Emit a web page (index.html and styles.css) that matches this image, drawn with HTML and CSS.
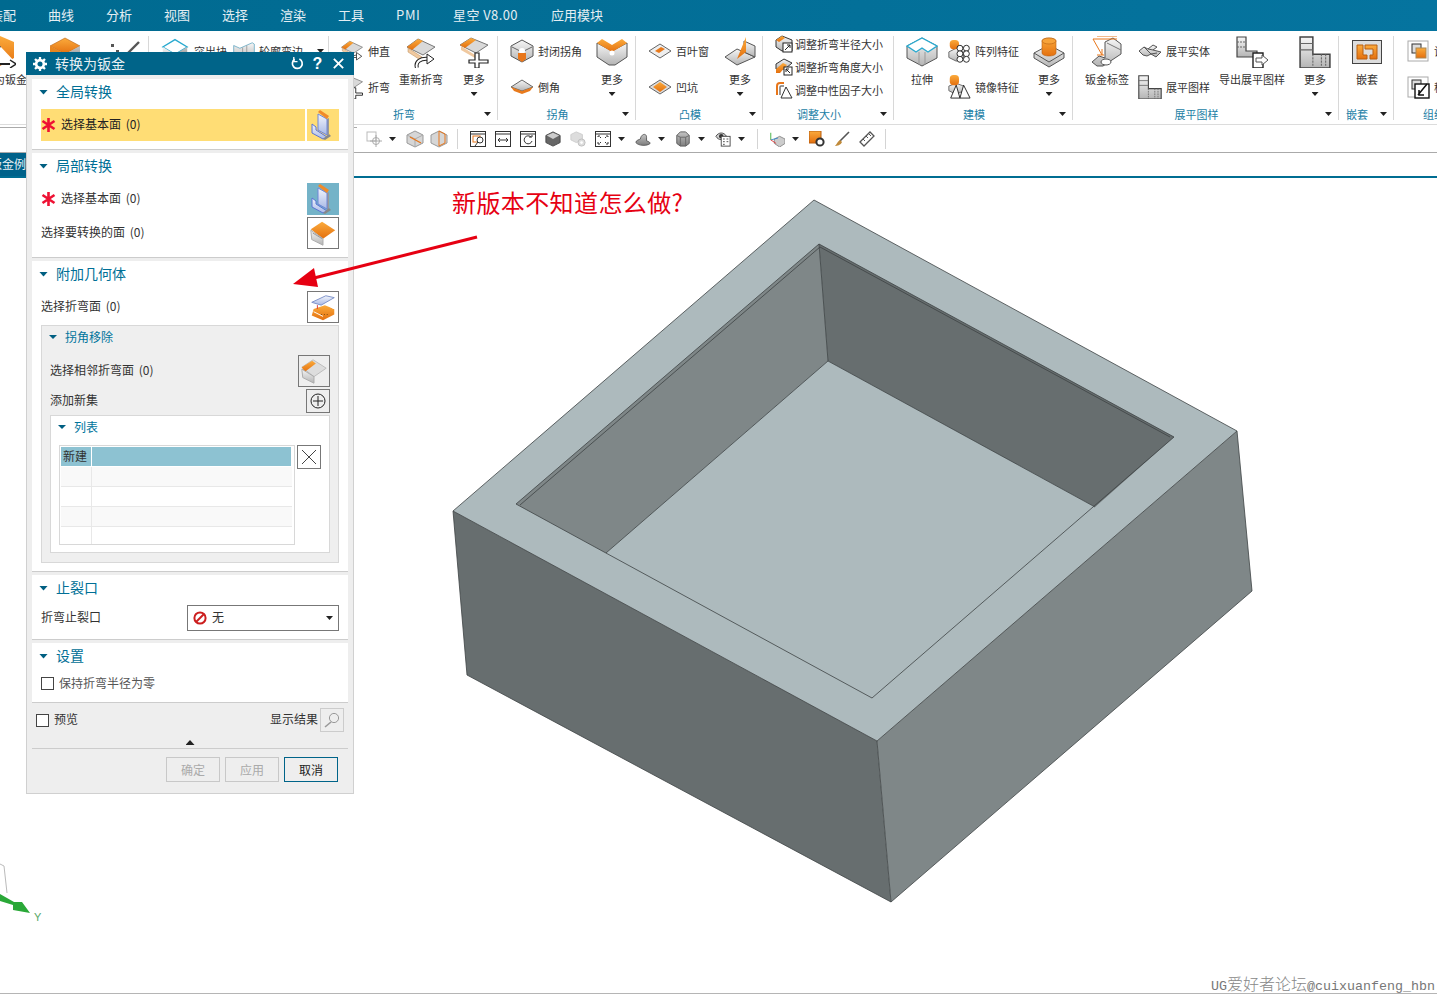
FILE: index.html
```html
<!DOCTYPE html>
<html lang="zh">
<head>
<meta charset="utf-8">
<title>转换为钣金</title>
<link rel="stylesheet" href="styles.css">
</head>
<body>
<svg class="defs" aria-hidden="true">
  <defs>
    <linearGradient id="go" x1="0" y1="0" x2="0" y2="1"><stop offset="0" stop-color="#fbab3c"/><stop offset="1" stop-color="#e4700f"/></linearGradient>
    <linearGradient id="gg" x1="0" y1="0" x2="0" y2="1"><stop offset="0" stop-color="#f6f6f6"/><stop offset="1" stop-color="#b4b4b4"/></linearGradient>
    <linearGradient id="gd" x1="0" y1="0" x2="0" y2="1"><stop offset="0" stop-color="#c4c4c4"/><stop offset="1" stop-color="#7d7d7d"/></linearGradient>
    <linearGradient id="gb" x1="0" y1="0" x2="0" y2="1"><stop offset="0" stop-color="#f2f5fc"/><stop offset="1" stop-color="#a9b9e6"/></linearGradient>

    <symbol id="i-convert" viewBox="0 0 32 32"><path d="M4 6 16 0l14 6v16L16 30z" fill="url(#go)"/><path d="M4 6l12 6v12L4 18z" fill="url(#gg)" stroke="#666"/><path d="M16 10 6 28h22l5-0" fill="#fff" stroke="#222" stroke-width="2"/><path d="M26 24l6 4-6 4" fill="#fff" stroke="#222" stroke-width="1.5"/></symbol>
    <symbol id="i-box" viewBox="0 0 32 32"><path d="M16 2 31 10 16 18 1 10z" fill="url(#go)" stroke="#b85f10" stroke-width=".6"/><path d="M1 10 16 18V30L1 22z" fill="#e8861f"/><path d="M31 10 16 18V30L31 22z" fill="url(#gd)"/></symbol>
    <symbol id="i-sketch" viewBox="0 0 32 32"><g fill="#555"><rect x="2" y="8" width="3" height="3"/><rect x="7" y="14" width="3" height="3"/><rect x="2" y="18" width="3" height="3"/></g><path d="M12 24 30 6" stroke="#555" stroke-width="2.4"/></symbol>
    <symbol id="i-tab" viewBox="0 0 32 32"><path d="M16 2 31 11 16 20 1 11z" fill="#fff" stroke="#27a9cf" stroke-width="1.6"/><path d="M1 11 16 20V30L1 21z" fill="url(#gg)"/><path d="M31 11 16 20V30L31 21z" fill="url(#gd)"/></symbol>
    <symbol id="i-flange" viewBox="0 0 32 32"><path d="M1 8 10 12 28 4 31 6V28L10 30 1 24z" fill="url(#gg)" stroke="#4d9cbb"/><path d="M14 11V28M20 8V28" stroke="#888"/></symbol>
    <symbol id="i-rebend" viewBox="0 0 32 32"><path d="M13 3 30 11 18 19 2 11z" fill="#d9d9d9" stroke="#777"/><path d="M13 3 18 5 7 14 2 11z" fill="url(#go)"/><path d="M3 12 17 21V25L3 16z" fill="#f0c9a0" stroke="#b98a55" stroke-width=".5"/><path d="M12 32C10 26 15 22 24 23" fill="none" stroke="#222" stroke-width="4"/><path d="M12 32C10 26 15 22 24 23" fill="none" stroke="#fff" stroke-width="2"/><path d="M22 18l7 5-7 5z" fill="#fff" stroke="#222"/></symbol>
    <symbol id="i-plus" viewBox="0 0 32 32"><path d="M13 2 30 9 18 17 2 9z" fill="#d9d9d9" stroke="#777"/><path d="M13 2 18 4 7 12 2 9z" fill="url(#go)"/><path d="M3 10 17 19V22L3 14z" fill="#f0c9a0"/><path d="M17 17h4v7h9v3h-9v5h-4v-5H11v-3h6z" fill="#fff" stroke="#222" stroke-width="1.2"/></symbol>
    <symbol id="i-close" viewBox="0 0 24 24"><path d="M12 1 23 7V17L12 23 1 17V7z" fill="url(#gg)" stroke="#555"/><path d="M2 8 12 13 22 8" fill="none" stroke="#666"/><circle cx="12" cy="12" r="3" fill="#fff"/><path d="M8 14h8v6l-4 3-4-3z" fill="#e8761a"/></symbol>
    <symbol id="i-chamfer" viewBox="0 0 24 16"><path d="M12 1 23 8 12 12 1 8z" fill="url(#gg)" stroke="#666"/><path d="M1 8 12 12 23 8 20 12 12 15 4 12z" fill="#e87a1c"/></symbol>
    <symbol id="i-vcorner" viewBox="0 0 32 30"><path d="M1 6 16 14 31 6V20L19 28H13L1 20z" fill="url(#gg)" stroke="#555"/><path d="M1 6 6 2 16 8 26 2 31 6 16 15z" fill="url(#go)"/><circle cx="16" cy="16" r="2.5" fill="#fff"/></symbol>
    <symbol id="i-louver" viewBox="0 0 24 16"><path d="M12 1 23 8 12 15 1 8z" fill="#eee" stroke="#666"/><path d="M7 8 13 4 17 6 11 10z" fill="#e87a1c"/></symbol>
    <symbol id="i-dimple" viewBox="0 0 24 16"><path d="M12 1 23 8 12 15 1 8z" fill="#ddd" stroke="#666"/><path d="M12 3 19 8 12 13 5 8z" fill="url(#go)"/></symbol>
    <symbol id="i-gusset" viewBox="0 0 32 32"><path d="M1 21 13 29 31 21 13 13z" fill="url(#gg)" stroke="#555"/><path d="M20 5 31 10V21L20 16z" fill="url(#gg)" stroke="#555"/><path d="M13 23 22 1V16z" fill="url(#go)"/></symbol>
    <symbol id="i-adj1" viewBox="0 0 18 18"><path d="M1 5 7 1 17 5V16H7L1 12z" fill="url(#gg)" stroke="#333"/><path d="M1 5 7 1 10 3 4 7z" fill="url(#go)"/><rect x="8" y="8" width="9" height="9" fill="#fff" stroke="#222"/><path d="M10 15 15 10M12 10h3v3" fill="none" stroke="#222"/></symbol>
    <symbol id="i-adj2" viewBox="0 0 18 18"><path d="M1 6 9 1 17 5 10 11 1 11z" fill="url(#gg)" stroke="#333"/><path d="M1 11 8 5 12 7 5 15 1 15z" fill="url(#go)"/><rect x="9" y="9" width="8" height="8" fill="#fff" stroke="#222"/><path d="M11 11 15 15M11 14v-3h3" fill="none" stroke="#222"/></symbol>
    <symbol id="i-adj3" viewBox="0 0 18 18"><path d="M2 14V5Q2 2 5 2H9" fill="none" stroke="#e8761a" stroke-width="2"/><path d="M5 14V6Q5 5 6 5H9" fill="none" stroke="#777" stroke-width="1.5"/><path d="M11 6 6 17H17z" fill="#fff" stroke="#333"/></symbol>
    <symbol id="i-extrude" viewBox="0 0 32 30"><path d="M1 9V21L16 29 31 21V9L16 1z" fill="url(#gg)" stroke="#555"/><path d="M13 15V28M19 15V28" stroke="#999"/><path d="M1 9 16 1 31 9 22 15 16 11 10 15z" fill="#fff" stroke="#2aaad0" stroke-width="1.4"/></symbol>
    <symbol id="i-pattern" viewBox="0 0 26 26"><path d="M2 14 10 10 18 14V20L10 24 2 20z" fill="url(#gg)" stroke="#666"/><rect x="3" y="1" width="10" height="10" rx="4" fill="url(#go)"/><g fill="#fff" stroke="#222"><circle cx="14" cy="10" r="3.2"/><circle cx="21" cy="10" r="3.2"/><circle cx="14" cy="16" r="3.2"/><circle cx="21" cy="16" r="3.2"/><circle cx="14" cy="22" r="3.2"/><circle cx="21" cy="22" r="3.2"/></g></symbol>
    <symbol id="i-mirror" viewBox="0 0 26 26"><path d="M2 12 10 9 18 12V17L10 21 2 17z" fill="url(#gg)" stroke="#666"/><rect x="3" y="0" width="10" height="11" rx="4" fill="url(#go)"/><path d="M10 11 4 25H14zM18 11 14 25H25z" fill="#fff" stroke="#222"/></symbol>
    <symbol id="i-boss" viewBox="0 0 32 32"><path d="M1 17 16 9 31 17V22L16 31 1 22z" fill="url(#gg)" stroke="#555"/><path d="M1 17 16 26 31 17" fill="none" stroke="#555"/><path d="M9 5C9 1 23 1 23 5V17C23 21 9 21 9 17z" fill="url(#go)" stroke="#b85f10" stroke-width=".6"/><ellipse cx="16" cy="5" rx="7" ry="3" fill="#f7a33a" stroke="#b85f10" stroke-width=".6"/></symbol>
    <symbol id="i-label" viewBox="0 0 32 32"><path d="M1 26 8 20 14 22V6L22 2 30 8V18L12 30H6z" fill="url(#gg)" stroke="#555"/><path d="M16 7 30 14" stroke="#777"/><ellipse cx="15" cy="26" rx="5" ry="3" fill="#fff" stroke="#555"/><path d="M2 3H26M6 0H26M2 3 11 19M6 19H13M11 19V13" fill="none" stroke="#e8761a"/></symbol>
    <symbol id="i-flatsolid" viewBox="0 0 24 14"><path d="M1 7 6 3 10 5 15 1 19 3 15 6 23 8 18 13 13 10 9 12 5 11z" fill="url(#gg)" stroke="#555"/><path d="M6 3 13 10M15 6 10 5M19 9 13 10" stroke="#555" fill="none"/></symbol>
    <symbol id="i-flatpat" viewBox="0 0 30 30"><path d="M1 1H13V17H29V30H1z" fill="url(#gg)" stroke="#444" stroke-width="1.4"/><path d="M1 7H13M1 13H13" stroke="#666"/><path d="M13 17V30M21 17V30M25 17V30" stroke="#666" stroke-dasharray="2 1"/></symbol>
    <symbol id="i-export" viewBox="0 0 32 32"><path d="M1 1H10V15H21V21H1z" fill="url(#gg)" stroke="#444" stroke-width="1.2"/><path d="M1 6H10M1 11H10" stroke="#666" stroke-dasharray="2 1"/><path d="M17 17H27V32H17z" fill="#fff" stroke="#222" stroke-width="1.4"/><path d="M20 22H26V19L32 24 26 29V26H20z" fill="#fff" stroke="#555"/></symbol>
    <symbol id="i-nest" viewBox="0 0 30 24"><rect x=".5" y=".5" width="29" height="23" fill="#ddd" stroke="#444"/><path d="M5 5H11V15H15V19H5z M13 5H25V19H18V15H21V9H13z" fill="url(#go)" stroke="#b85f10"/></symbol>
    <symbol id="i-g1" viewBox="0 0 24 24"><rect x="2" y="2" width="20" height="20" fill="none" stroke="#aaa"/><rect x="6" y="5" width="9" height="9" fill="#ddd" stroke="#333"/><rect x="10" y="9" width="10" height="10" fill="url(#go)" stroke="#a85"/></symbol>
    <symbol id="i-g2" viewBox="0 0 24 24"><rect x="2" y="2" width="20" height="20" fill="none" stroke="#aaa"/><rect x="6" y="5" width="9" height="9" fill="#ddd" stroke="#333"/><rect x="9" y="9" width="14" height="14" fill="#fff" stroke="#111" stroke-width="1.4"/><path d="M12 20 21 9M13 15v5h5" fill="none" stroke="#111" stroke-width="1.5"/></symbol>

    <symbol id="t-snap" viewBox="0 0 16 16"><rect x="1" y="1" width="9" height="9" fill="none" stroke="#bbb"/><circle cx="10" cy="10" r="3.5" fill="none" stroke="#aaa"/><path d="M10 4V16M4 10H16" stroke="#aaa"/></symbol>
    <symbol id="t-cube1" viewBox="0 0 18 18"><path d="M9 1 17 5V13L9 17 1 13V5z" fill="#d6d6d6" stroke="#999"/><path d="M1 5 9 9 17 5M9 9V17" stroke="#aaa" fill="none"/><path d="M4 7 15 13" stroke="#e8761a" stroke-width="1.4"/></symbol>
    <symbol id="t-cube2" viewBox="0 0 18 18"><path d="M9 1 17 5V13L9 17 1 13V5z" fill="#d6d6d6" stroke="#999"/><path d="M9 1 15 4V13L9 16z" fill="none" stroke="#e8761a"/></symbol>
    <symbol id="t-win1" viewBox="0 0 16 16"><rect x=".5" y=".5" width="15" height="15" fill="#fff" stroke="#333"/><path d="M1 3H15" stroke="#333"/><rect x="3" y="5" width="7" height="6" fill="none" stroke="#e8761a"/><circle cx="10" cy="9" r="3" fill="#fff" stroke="#333"/><path d="M8 11 5 15" stroke="#333"/></symbol>
    <symbol id="t-win2" viewBox="0 0 16 16"><rect x=".5" y=".5" width="15" height="15" fill="#fff" stroke="#333"/><path d="M1 3H15M3 9H13M5 7 3 9 5 11M11 7 13 9 11 11" stroke="#333" fill="none"/></symbol>
    <symbol id="t-win3" viewBox="0 0 16 16"><rect x=".5" y=".5" width="15" height="15" fill="#fff" stroke="#333"/><path d="M1 3H15" stroke="#333"/><path d="M11 6A4 4 0 1 0 12 10M9 6h3V4" fill="none" stroke="#333"/></symbol>
    <symbol id="t-solid" viewBox="0 0 18 18"><path d="M9 1 17 5V13L9 17 1 13V5z" fill="#666" stroke="#444"/><path d="M9 2 16 5 9 9 2 5z" fill="#ccc"/></symbol>
    <symbol id="t-fade" viewBox="0 0 18 18"><path d="M7 1 14 4V10L7 13 1 10V4z" fill="#ddd" stroke="#ccc"/><circle cx="13" cy="13" r="4" fill="#ddd" stroke="#bbb"/><circle cx="13" cy="13" r="1.5" fill="#fff"/></symbol>
    <symbol id="t-fit" viewBox="0 0 16 16"><rect x=".5" y=".5" width="15" height="15" fill="#fff" stroke="#333"/><path d="M1 3H15M3 6V5H5M11 5H13V6M3 11V13H5M11 13H13V11M6 7 5 6M10 7 11 6M6 11 5 12M10 11 11 12" fill="none" stroke="#333"/></symbol>
    <symbol id="t-hat" viewBox="0 0 18 18"><path d="M1 13C1 10 5 10 6 9 7 3 13 2 13 7V11C16 12 17 13 17 14 14 17 4 17 1 13z" fill="url(#gd)" stroke="#555"/></symbol>
    <symbol id="t-cyl" viewBox="0 0 18 18"><path d="M2 5 6 1H12L16 5V14L12 17H6L2 14z" fill="url(#gd)" stroke="#555"/><path d="M2 5 6 7H12L16 5M6 7V17M12 7V17" fill="none" stroke="#666"/></symbol>
    <symbol id="t-eye" viewBox="0 0 18 18"><path d="M1 6C4 1 10 1 13 6 10 11 4 11 1 6z" fill="#ccc" stroke="#444"/><circle cx="7" cy="6" r="2.5" fill="#333"/><rect x="7" y="6" width="10" height="11" fill="#fff" stroke="#444"/><path d="M9 9h2M13 9h2M9 12h2M13 12h2M9 15h2" stroke="#444"/></symbol>
    <symbol id="t-wcs" viewBox="0 0 18 18"><path d="M6 9 12 6 18 9V14L12 18 6 14z" fill="#ccc" stroke="#888"/><path d="M2 2V10" stroke="#3a3"/><path d="M2 10 10 8" stroke="#38c"/><path d="M2 10 8 14" stroke="#d33"/></symbol>
    <symbol id="t-gear" viewBox="0 0 16 16"><rect x="0" y="0" width="12" height="12" fill="url(#go)" stroke="#b85f10"/><circle cx="11" cy="11" r="3.6" fill="#fff" stroke="#333" stroke-width="2"/></symbol>
    <symbol id="t-brush" viewBox="0 0 16 16"><path d="M15 1 6 10" stroke="#555" stroke-width="1.6"/><path d="M6 9 8 11C7 14 3 15 1 15 3 13 3 11 6 9z" fill="#c08a3a"/></symbol>
    <symbol id="t-ruler" viewBox="0 0 16 16"><path d="M1 11 11 1 15 5 5 15z" fill="#fff" stroke="#555" stroke-width="1.3"/><path d="M4 8 6 10M7 5 9 7M10 3 12 5" stroke="#555"/></symbol>

    <symbol id="d-base" viewBox="0 0 32 32"><path d="M20 10 22 9V25L20 28z" fill="#999"/><path d="M11 5 20 10V26L11 21z" fill="url(#gb)" stroke="#6f86d8"/><path d="M5 15 9 18V21L20 28 16 30 5 24z" fill="url(#gb)" stroke="#5a74d4"/><path d="M11 3 13 1 22 7 20 10z" fill="#f08a2a"/><path d="M16 30 22 25 24 27 18 31z" fill="#888"/></symbol>
    <symbol id="d-face" viewBox="0 0 32 32"><path d="M15 4 29 13 16 22 3 12z" fill="url(#go)"/><path d="M3 13 16 22V29L4 23z" fill="url(#gg)" stroke="#aaa"/><path d="M5 16 15 22" stroke="#999"/></symbol>
    <symbol id="d-bend" viewBox="0 0 32 32"><path d="M4 11 19 4 28 6 14 14z" fill="url(#gb)" stroke="#7b8fc8"/><path d="M6 18 18 14 28 18V24L16 30 4 25z" fill="url(#go)"/><path d="M6 21 16 26M24 16 28 18" stroke="#fff"/><path d="M10 18V14" stroke="#d33"/><path d="M14 24h8" stroke="#7a4a10" stroke-dasharray="1 2"/></symbol>
    <symbol id="d-adj" viewBox="0 0 32 32"><path d="M15 4 29 13 16 22 3 12z" fill="#ddd" stroke="#bbb"/><path d="M3 12 14 5 18 8 6 17z" fill="url(#go)"/><path d="M3 14 16 22V29L4 23z" fill="url(#gg)" stroke="#aaa"/></symbol>
    <symbol id="s-star" viewBox="0 0 14 14"><path d="M7 0V14M1 3 13 11M13 3 1 11" stroke="#ee1133" stroke-width="2.6"/></symbol>
    <symbol id="s-gear" viewBox="0 0 16 16"><circle cx="8" cy="8" r="4.4" fill="none" stroke="#fff" stroke-width="3"/><path d="M8 0V3M8 13V16M0 8H3M13 8H16M2.3 2.3 4.4 4.4M11.6 11.6 13.7 13.7M13.7 2.3 11.6 4.4M4.4 11.6 2.3 13.7" stroke="#fff" stroke-width="2.6"/></symbol>
  </defs>
</svg>

<header class="menubar">
  <span class="menu-item menu-first">装配</span>
  <span class="menu-item">曲线</span>
  <span class="menu-item">分析</span>
  <span class="menu-item">视图</span>
  <span class="menu-item">选择</span>
  <span class="menu-item">渲染</span>
  <span class="menu-item">工具</span>
  <span class="menu-item menu-pmi">PMI</span>
  <span class="menu-item menu-ver">星空 V8.00</span>
  <span class="menu-item">应用模块</span>
</header>

<section class="ribbon">
  <div class="group g-a">
    <div class="group-body">
      <div class="big w-55 first-big"><svg class="ic32"><use href="#i-convert"/></svg><span>转换为钣金</span></div>
      <div class="big w-32 a-2"><svg class="ic32"><use href="#i-box"/></svg></div>
      <div class="big w-32 a-3"><svg class="ic32"><use href="#i-sketch"/></svg></div>
    </div>
  </div>
  <div class="group g-b">
    <div class="group-body">
      <div class="small"><svg class="ic-l"><use href="#i-tab"/></svg><span>突出块</span></div>
      <div class="small"><svg class="ic-m"><use href="#i-flange"/></svg><span>轮廓弯边</span></div>
      <span class="caret-d"></span>
    </div>
  </div>
  <div class="group g-fold">
    <div class="group-body">
      <div class="col2">
        <div class="small"><svg class="ic24"><use href="#i-rebend"/></svg><span>伸直</span></div>
        <div class="small"><svg class="ic24"><use href="#i-plus"/></svg><span>折弯</span></div>
      </div>
      <div class="big w-52"><svg class="ic32"><use href="#i-rebend"/></svg><span>重新折弯</span></div>
      <div class="big w-44"><svg class="ic32"><use href="#i-plus"/></svg><span>更多</span><i class="caret-d"></i></div>
    </div>
    <div class="group-foot"><span>折弯</span><i class="caret-d"></i></div>
  </div>
  <div class="group g-corner">
    <div class="group-body">
      <div class="col2">
        <div class="small"><svg class="ic24"><use href="#i-close"/></svg><span>封闭拐角</span></div>
        <div class="small"><svg class="ic24 ic-flat"><use href="#i-chamfer"/></svg><span>倒角</span></div>
      </div>
      <div class="big w-32"><svg class="ic32"><use href="#i-vcorner"/></svg><span>更多</span><i class="caret-d"></i></div>
    </div>
    <div class="group-foot"><span>拐角</span><i class="caret-d"></i></div>
  </div>
  <div class="group g-bump">
    <div class="group-body">
      <div class="col2">
        <div class="small"><svg class="ic24 ic-flat"><use href="#i-louver"/></svg><span>百叶窗</span></div>
        <div class="small"><svg class="ic24 ic-flat"><use href="#i-dimple"/></svg><span>凹坑</span></div>
      </div>
      <div class="big w-32"><svg class="ic32"><use href="#i-gusset"/></svg><span>更多</span><i class="caret-d"></i></div>
    </div>
    <div class="group-foot"><span>凸模</span><i class="caret-d"></i></div>
  </div>
  <div class="group g-size">
    <div class="group-body">
      <div class="col3">
        <div class="small"><svg class="ic18"><use href="#i-adj1"/></svg><span>调整折弯半径大小</span></div>
        <div class="small"><svg class="ic18"><use href="#i-adj2"/></svg><span>调整折弯角度大小</span></div>
        <div class="small"><svg class="ic18"><use href="#i-adj3"/></svg><span>调整中性因子大小</span></div>
      </div>
    </div>
    <div class="group-foot"><span>调整大小</span><i class="caret-d"></i></div>
  </div>
  <div class="group g-model">
    <div class="group-body">
      <div class="big w-36"><svg class="ic32"><use href="#i-extrude"/></svg><span>拉伸</span></div>
      <div class="col2">
        <div class="small"><svg class="ic24"><use href="#i-pattern"/></svg><span>阵列特征</span></div>
        <div class="small"><svg class="ic24"><use href="#i-mirror"/></svg><span>镜像特征</span></div>
      </div>
      <div class="big w-46"><svg class="ic32"><use href="#i-boss"/></svg><span>更多</span><i class="caret-d"></i></div>
    </div>
    <div class="group-foot"><span>建模</span><i class="caret-d"></i></div>
  </div>
  <div class="group g-flat">
    <div class="group-body">
      <div class="big w-44"><svg class="ic32"><use href="#i-label"/></svg><span>钣金标签</span></div>
      <div class="col2">
        <div class="small"><svg class="ic24 ic-flat"><use href="#i-flatsolid"/></svg><span>展平实体</span></div>
        <div class="small"><svg class="ic24"><use href="#i-flatpat"/></svg><span>展平图样</span></div>
      </div>
      <div class="big w-66"><svg class="ic32"><use href="#i-export"/></svg><span>导出展平图样</span></div>
      <div class="big w-42"><svg class="ic32"><use href="#i-flatpat"/></svg><span>更多</span><i class="caret-d"></i></div>
    </div>
    <div class="group-foot"><span>展平图样</span><i class="caret-d"></i></div>
  </div>
  <div class="group g-nest">
    <div class="group-body">
      <div class="big w-30"><svg class="ic-nest"><use href="#i-nest"/></svg><span>嵌套</span></div>
    </div>
    <div class="group-foot"><span>嵌套</span><i class="caret-d"></i></div>
  </div>
  <div class="group g-last">
    <div class="group-body">
      <div class="col2">
        <div class="small"><svg class="ic24"><use href="#i-g1"/></svg><span>设计</span></div>
        <div class="small"><svg class="ic24"><use href="#i-g2"/></svg><span>移动</span></div>
      </div>
    </div>
    <div class="group-foot foot-left"><span>组织</span></div>
  </div>
</section>

<nav class="toolbar">
  <span class="tb-field"></span>
  <svg class="tb"><use href="#t-snap"/></svg><i class="caret-d"></i>
  <svg class="tb tb-18"><use href="#t-cube1"/></svg>
  <svg class="tb tb-18 tb-flush"><use href="#t-cube2"/></svg>
  <span class="tb-sep"></span>
  <svg class="tb"><use href="#t-win1"/></svg>
  <svg class="tb"><use href="#t-win2"/></svg>
  <svg class="tb"><use href="#t-win3"/></svg>
  <svg class="tb"><use href="#t-solid"/></svg>
  <svg class="tb"><use href="#t-fade"/></svg>
  <svg class="tb"><use href="#t-fit"/></svg><i class="caret-d"></i>
  <svg class="tb"><use href="#t-hat"/></svg><i class="caret-d"></i>
  <svg class="tb"><use href="#t-cyl"/></svg><i class="caret-d"></i>
  <svg class="tb"><use href="#t-eye"/></svg><i class="caret-d"></i>
  <span class="tb-sep tb-sep-2"></span>
  <svg class="tb"><use href="#t-wcs"/></svg><i class="caret-d"></i>
  <svg class="tb"><use href="#t-gear"/></svg>
  <svg class="tb"><use href="#t-brush"/></svg>
  <svg class="tb"><use href="#t-ruler"/></svg>
  <span class="tb-sep tb-sep-3"></span>
</nav>

<div class="tabbar"><span class="tab">钣金例</span></div>

<main class="canvas">
  <svg class="model" viewBox="0 178 1437 815">
    <polygon class="f-top" points="814,200 1237,431 877,741 453,511"/>
    <polygon class="f-dark" points="819,244 1174,437 1095,507 828,361"/>
    <polygon class="f-mid" points="819,244 828,361 606,553 516,504"/>
    <polygon class="f-top" points="828,361 1095,507 872,698 606,553"/>
    <polygon class="f-dark" points="453,511 877,741 891,902 467,675"/>
    <polygon class="f-mid" points="877,741 1237,431 1252,591 891,902"/>
    <path class="edge" d="M814 200 1237 431 877 741 453 511Z M453 511 467 675 891 902 1252 591 1237 431 M877 741 891 902"/>
    <path class="edge" d="M516 504 819 244 1174 437 872 698Z M828 361 1095 507 M828 361 606 553 M819 244 828 361"/>
    <path class="edge" d="M520 505 820 247 1170 437"/>
    <path class="triad-thin" d="M0 864 4 866 7 893"/>
    <path class="triad-arrow" d="M0 894 14 902 22 902 30 913 13 910 13 905 0 901Z"/>
    <text class="triad-y" x="34" y="921">Y</text>
  </svg>
  <div class="watermark">UG<span class="wm-cjk">爱好者论坛</span>@cuixuanfeng_hbn</div>
</main>

<aside class="dialog">
  <div class="dlg-title">
    <svg class="dlg-gear"><use href="#s-gear"/></svg>
    <span class="dlg-name">转换为钣金</span>
    <svg class="dlg-tool" viewBox="0 0 14 14"><path d="M9 2.2A5.3 5.3 0 1 1 4 2.5" fill="none" stroke="#fff" stroke-width="1.8"/><path d="M3 0V5H7" fill="none" stroke="#fff" stroke-width="1.4"/></svg>
    <span class="dlg-help">?</span>
    <svg class="dlg-tool" viewBox="0 0 14 14"><path d="M2 2 12 12M12 2 2 12" stroke="#fff" stroke-width="2"/></svg>
  </div>
  <div class="dlg-body">
    <section class="sec">
      <h3 class="sec-head"><i class="caret"></i><span>全局转换</span></h3>
      <div class="row row-gap">
        <div class="sel-active"><svg class="star"><use href="#s-star"/></svg><span>选择基本面 (0)</span></div>
        <span class="ic-btn btn-yellow"><svg class="ic32"><use href="#d-base"/></svg></span>
      </div>
    </section>
    <section class="sec">
      <h3 class="sec-head"><i class="caret"></i><span>局部转换</span></h3>
      <div class="row row-gap">
        <div class="lbl"><svg class="star"><use href="#s-star"/></svg><span>选择基本面 (0)</span></div>
        <span class="ic-btn btn-blue"><svg class="ic32"><use href="#d-base"/></svg></span>
      </div>
      <div class="row row-tight">
        <span>选择要转换的面 (0)</span>
        <span class="ic-btn btn-line"><svg class="ic-in"><use href="#d-face"/></svg></span>
      </div>
    </section>
    <section class="sec">
      <h3 class="sec-head"><i class="caret"></i><span>附加几何体</span></h3>
      <div class="row row-gap">
        <span>选择折弯面 (0)</span>
        <span class="ic-btn btn-line"><svg class="ic-in"><use href="#d-bend"/></svg></span>
      </div>
      <div class="panel">
        <h4 class="sub-head"><i class="caret caret-s"></i><span>拐角移除</span></h4>
        <div class="row row-p7">
          <span>选择相邻折弯面 (0)</span>
          <span class="ic-btn btn-line btn-grey"><svg class="ic-in"><use href="#d-adj"/></svg></span>
        </div>
        <div class="row row-tight">
          <span>添加新集</span>
          <span class="ic-btn ic-btn-s btn-line btn-grey"><svg class="ic-s" viewBox="0 0 16 16"><circle cx="8" cy="8" r="7" fill="none" stroke="#222"/><path d="M8 3V13M3 8H13" stroke="#222"/></svg></span>
        </div>
        <div class="list">
          <h4 class="sub-head"><i class="caret caret-s"></i><span>列表</span></h4>
          <div class="list-body">
            <div class="tbl">
              <div class="tbl-head"><span class="th-1">新建</span><span class="th-2"></span></div>
              <div class="tbl-row tbl-odd"><span></span><span></span></div>
              <div class="tbl-row"><span></span><span></span></div>
              <div class="tbl-row tbl-odd"><span></span><span></span></div>
              <div class="tbl-row tbl-end"><span></span><span></span></div>
            </div>
            <span class="ic-btn ic-btn-s btn-line"><svg class="ic-s" viewBox="0 0 16 16"><path d="M1 1 15 15M15 1 1 15" stroke="#444"/></svg></span>
          </div>
        </div>
      </div>
    </section>
    <section class="sec">
      <h3 class="sec-head"><i class="caret"></i><span>止裂口</span></h3>
      <div class="row row-gap">
        <span>折弯止裂口</span>
        <div class="select">
          <svg class="no-ic" viewBox="0 0 14 14"><circle cx="7" cy="7" r="5.6" fill="#fff" stroke="#cc1f1f" stroke-width="2"/><path d="M3 11 11 3" stroke="#cc1f1f" stroke-width="2"/></svg>
          <span>无</span><i class="caret-d caret-end"></i>
        </div>
      </div>
    </section>
    <section class="sec sec-last">
      <h3 class="sec-head"><i class="caret"></i><span>设置</span></h3>
      <label class="check-row"><i class="check"></i><span class="muted">保持折弯半径为零</span></label>
    </section>
    <div class="foot-row">
      <label class="foot-check"><i class="check"></i><span>预览</span></label>
      <span class="foot-result">显示结果</span>
      <span class="ic-btn ic-btn-s btn-faint"><svg class="ic-s" viewBox="0 0 16 16"><circle cx="10" cy="6" r="4.6" fill="none" stroke="#999"/><path d="M7 10 1 15" stroke="#999" stroke-width="1.6"/></svg></span>
    </div>
    <div class="foot-caret"><i class="caret-u"></i></div>
    <div class="foot-btns">
      <span class="btn btn-off">确定</span>
      <span class="btn btn-off">应用</span>
      <span class="btn btn-on">取消</span>
    </div>
  </div>
</aside>

<div class="note">新版本不知道怎么做?</div>
<svg class="note-arrow" viewBox="0 0 1437 997"><path class="arrow-line" d="M477 237 314 278"/><polygon class="arrow-head" points="293,284 314,268 318,287"/></svg>
</body>
</html>
```

FILE: styles.css
```css
* { box-sizing: border-box; }
html, body { margin: 0; padding: 0; }
body {
  width: 1437px;
  height: 997px;
  overflow: hidden;
  position: relative;
  background: #fff;
  color: #333;
  font: 12px/16px "Noto Sans CJK SC", "Noto Sans", sans-serif;
}
h3, h4 { margin: 0; font-weight: 400; }
i { display: block; font-style: normal; }
svg { display: block; flex: none; }
.defs { position: absolute; width: 0; height: 0; }

/* menu */
.menubar {
  height: 31px;
  display: flex;
  align-items: center;
  gap: 32px;
  padding-bottom: 1px;
  overflow: hidden;
  background: linear-gradient(90deg, #006a90, #05749f);
  color: #e4eef3;
  font-size: 13px;
}
.menu-item { flex: none; }
.menu-first { margin-left: -10px; }
.menu-pmi { width: 25px; letter-spacing: .6px; }
.menu-ver { width: 66px; letter-spacing: .4px; white-space: nowrap; }

/* ribbon */
.ribbon {
  height: 94px;
  display: flex;
  padding-top: 5px;
  overflow: hidden;
  border-bottom: 1px solid #dcdcdc;
  background: #fff;
  font-size: 11px;
  line-height: 16px;
}
.group {
  flex: none;
  height: 84px;
  border-right: 1px solid #d8d8d8;
  display: flex;
  flex-direction: column;
}
.group-body { height: 72px; display: flex; }
.group-foot {
  height: 12px;
  margin-top: -1px;
  display: grid;
  grid-template-columns: 1fr auto 1fr 18px;
  align-items: center;
  color: #1b7ea5;
  line-height: 14px;
  white-space: nowrap;
}
.group-foot span { grid-column: 2; }
.group-foot .caret-d { grid-column: 4; justify-self: end; margin-right: 6px; }
.foot-left { display: block; padding-left: 29px; }

.g-a { width: 149px; }
.g-b { width: 180px; }
.g-fold { width: 169px; }
.g-corner { width: 138px; }
.g-bump { width: 127px; }
.g-size { width: 131px; }
.g-model { width: 179px; }
.g-flat { width: 266px; }
.g-nest { width: 55px; }
.g-last { flex: 1; border-right: 0; min-width: 0; overflow: hidden; }

.first-big { margin-left: -28px; }
.a-2 { margin-left: 22px; }
.a-3 { margin-left: 28px; }
.g-b .group-body { padding: 0 0 0 11px; gap: 6px; height: 30px; align-items: center; }
.g-b .group-body .caret-d { margin-left: 8px; }
.g-fold .group-body { padding-left: 11px; gap: 5px; }
.g-corner .group-body { padding-left: 12px; gap: 14px; }
.g-bump .group-body { padding-left: 12px; gap: 15px; }
.g-size .group-body { padding-left: 12px; }
.g-model .group-body { padding-left: 10px; gap: 7px; }
.g-flat .group-body { padding-left: 12px; gap: 9px; }
.g-nest .group-body { padding-left: 13px; }
.g-last .group-body { padding-left: 12px; }

.big {
  flex: none;
  display: flex;
  flex-direction: column;
  align-items: center;
  white-space: nowrap;
}
.big > svg { margin-bottom: 2px; }
.big > span { display: block; margin-top: 1px; }
.big > .caret-d { margin-top: 5px; }
.w-30 { width: 30px; }
.w-32 { width: 32px; }
.w-36 { width: 36px; }
.w-42 { width: 42px; }
.w-44 { width: 44px; }
.w-46 { width: 46px; }
.w-52 { width: 52px; }
.w-55 { width: 55px; }
.w-66 { width: 66px; }

.col2 { flex: none; display: flex; flex-direction: column; gap: 6px; }
.col2 .small { height: 30px; }
.col3 { display: flex; flex-direction: column; gap: 3px; margin-top: -2px; }
.col3 .small { height: 20px; gap: 2px; }
.small { display: flex; align-items: center; gap: 4px; white-space: nowrap; flex: none; }
.small span { padding-bottom: 1px; }

.ic32 { width: 32px; height: 32px; }
.ic24 { width: 24px; height: 24px; }
.ic-flat { height: 16px; }
.ic18 { width: 18px; height: 18px; }
.ic-l { width: 30px; height: 26px; }
.ic-m { width: 22px; height: 26px; }
.big > .ic-nest { width: 30px; height: 24px; margin-top: 4px; margin-bottom: 6px; }

.caret-d {
  flex: none;
  width: 7px;
  height: 4px;
  background: #222;
  clip-path: polygon(0 0, 100% 0, 50% 100%);
}

/* toolbar */
.toolbar {
  height: 28px;
  padding-top: 1px;
  display: flex;
  align-items: center;
  gap: 6px;
  border-bottom: 1px solid #aaa;
  overflow: hidden;
}
.toolbar .tb { width: 16px; height: 16px; margin-left: 3px; }
.toolbar .caret-d { margin: 0 1px; }
.toolbar .tb-18 { width: 18px; height: 18px; }
.toolbar .tb-flush { margin-left: 0; }
.tb-field { flex: none; width: 357px; height: 24px; border-top: 1px solid #aaa; }
.tb-sep { flex: none; width: 1px; height: 20px; margin: 0 3px; background: #d4d4d4; }
.tb-sep-2 { margin: 0 2px 0 5px; }
.tb-sep-3 { margin: 0 0 0 4px; }

/* tabs */
.tabbar {
  height: 25px;
  border-bottom: 2px solid #006d92;
  overflow: hidden;
}
.tab {
  display: block;
  width: 26px;
  height: 25px;
  padding-top: 3px;
  text-indent: -10px;
  overflow: hidden;
  white-space: nowrap;
  background: #00628a;
  color: #e8f0f4;
}

/* canvas */
.canvas {
  position: relative;
  height: 816px;
  border-bottom: 1px solid #b5b5b5;
}
.model { width: 1437px; height: 815px; }
.f-top { fill: #adbabd; }
.f-dark { fill: #676e6f; }
.f-mid { fill: #7f8788; }
.edge { fill: none; stroke: #3d4244; stroke-width: .8; }
.triad-thin { fill: none; stroke: #bbb; stroke-width: 1; }
.triad-arrow { fill: #2aa838; }
.triad-y { fill: #5aa868; font: 11px "Liberation Sans", sans-serif; }
.watermark {
  position: absolute;
  right: 2px;
  bottom: -3px;
  color: #777;
  font: 13.33px/18px "Liberation Mono", monospace;
  white-space: nowrap;
}
.wm-cjk { font: 300 16px/18px "Noto Sans CJK SC", sans-serif; color: #888; }

/* dialog */
.dialog {
  position: absolute;
  left: 26px;
  top: 52px;
  width: 328px;
  height: 742px;
  background: #eee;
  border: 1px solid #d0d0d0;
  border-top: 0;
  color: #333;
  word-spacing: 2px;
}
.dlg-title {
  height: 23px;
  margin: 0 -1px;
  display: flex;
  align-items: center;
  padding: 0 9px 0 7px;
  background: #006489;
  color: #e8f0f4;
  font-size: 14px;
}
.dlg-gear { width: 14px; height: 14px; }
.dlg-name { margin-left: 8px; padding-bottom: 2px; flex: 1; }
.dlg-tool { width: 13px; height: 13px; }
.dlg-help { width: 13px; margin: 0 8px 0 7px; font: 700 16px/18px "Liberation Sans", sans-serif; color: #fff; text-align: center; }
.dlg-body { padding: 4px 5px 0; }

.sec {
  background: #fff;
  border-bottom: 1px solid #ccc;
  padding: 0 9px 8px;
  margin-bottom: 3px;
}
.sec-last { padding-bottom: 9px; margin-bottom: 0; }
.sec-head {
  height: 26px;
  display: flex;
  align-items: center;
  gap: 8px;
  margin-left: -2px;
  color: #006f96;
  font-size: 14px;
}
.sec-head span { padding-bottom: 2px; }
.caret {
  flex: none;
  width: 9px;
  height: 5px;
  background: #005f82;
  clip-path: polygon(0 0, 100% 0, 50% 100%);
}
.caret-s { width: 8px; height: 4px; }
.row { display: flex; align-items: center; justify-content: space-between; }
.row > span:not(.ic-btn), .lbl span, .sel-active span, .select span, .foot-check span, .foot-result { padding-bottom: 2px; }
.row-gap { margin-top: 4px; }
.row-tight { margin-top: 2px; }
.row-p7 { margin-top: 7px; }
.lbl { display: flex; align-items: center; gap: 5px; }
.sel-active {
  width: 264px;
  height: 32px;
  display: flex;
  align-items: center;
  gap: 5px;
  background: #ffdd75;
  color: #222;
}
.star { width: 15px; height: 14px; }
.ic-btn { flex: none; width: 32px; height: 32px; display: block; }
.ic-btn-s { width: 24px; height: 24px; display: flex; align-items: center; justify-content: center; }
.btn-yellow { background: #ffdd75; }
.btn-blue { background: #74b3c8; }
.btn-line { border: 1px solid #777; background: #fff; }
.btn-grey { background: #eee; }
.btn-faint { border: 1px solid #ccc; background: #eee; }
.ic-in { width: 30px; height: 30px; }
.ic-s { width: 16px; height: 16px; }

.panel {
  height: 238px;
  margin-top: 2px;
  padding: 0 8px;
  background: #efefef;
  border: 1px solid #d8d8d8;
}
.sub-head {
  height: 22px;
  display: flex;
  align-items: center;
  gap: 8px;
  margin: 0 -1px;
  color: #00749c;
  font-size: 12px;
}
.sub-head span { padding-bottom: 1px; }
.list {
  height: 138px;
  margin-top: 2px;
  padding: 0 8px;
  background: #fff;
  border: 1px solid #d8d8d8;
}
.list-body { display: flex; gap: 2px; margin-top: 7px; align-items: flex-start; }
.tbl {
  width: 236px;
  height: 100px;
  padding: 1px 1px 0;
  border: 1px solid #d8d8d8;
}
.tbl-head, .tbl-row {
  display: grid;
  grid-template-columns: 31px 1fr;
  width: 231px;
}
.tbl-head { width: 230px; height: 20px; border-bottom: 1px solid #fff; }
.th-1 { background: #8dc2d2; border-right: 1px solid #fff; padding-left: 2px; line-height: 18px; color: #333; }
.th-2 { background: #8dc2d2; }
.tbl-row { height: 20px; border-bottom: 1px solid #e8e8e8; }
.tbl-row span:first-child { border-right: 1px solid #e8e8e8; }
.tbl-odd { background: #f9f9f9; }
.tbl-end { border-bottom: 0; height: 17px; }

.select {
  width: 152px;
  height: 26px;
  display: flex;
  align-items: center;
  gap: 5px;
  padding: 0 5px;
  background: #fff;
  border: 1px solid #777;
}
.no-ic { width: 14px; height: 14px; }
.caret-end { margin-left: auto; }
.check-row { display: flex; align-items: center; gap: 5px; height: 20px; margin-top: 4px; }
.check { flex: none; width: 13px; height: 13px; border: 1px solid #444; background: #fff; }
.muted { color: #555; }

.foot-row {
  height: 24px;
  margin-top: 5px;
  padding: 0 4px;
  display: flex;
  align-items: center;
}
.foot-check { display: flex; align-items: center; gap: 5px; flex: 1; }
.foot-result { margin-right: 2px; }
.foot-caret {
  height: 17px;
  display: flex;
  justify-content: center;
  padding-top: 8px;
  border-bottom: 1px solid #ccc;
}
.caret-u {
  width: 9px;
  height: 5px;
  background: #222;
  clip-path: polygon(50% 0, 100% 100%, 0 100%);
}
.foot-btns { display: flex; justify-content: flex-end; gap: 5px; margin-top: 8px; padding-right: 10px; }
.btn {
  width: 54px;
  height: 25px;
  line-height: 23px;
  text-align: center;
  border: 1px solid #c8c8c8;
}
.btn-off { color: #aaa; }
.btn-on { border-color: #006489; color: #222; }

/* annotation */
.note {
  position: absolute;
  left: 452px;
  top: 185px;
  color: #e60012;
  font-size: 24px;
  line-height: 34px;
  letter-spacing: .4px;
  white-space: nowrap;
}
.note-arrow { position: absolute; left: 0; top: 0; width: 1437px; height: 997px; pointer-events: none; }
.arrow-line { stroke: #e60012; stroke-width: 3; fill: none; }
.arrow-head { fill: #e60012; }
```
